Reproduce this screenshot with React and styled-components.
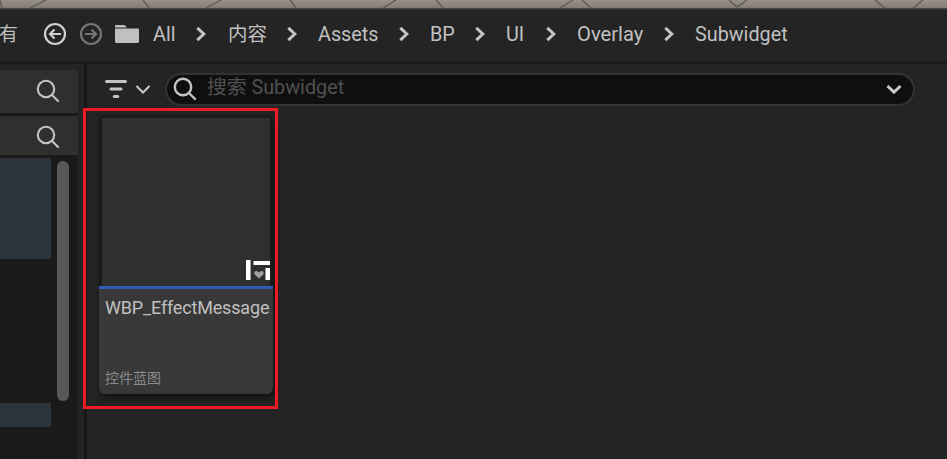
import React from "react";
import styled, { createGlobalStyle } from "styled-components";

const Global = createGlobalStyle`
  * { box-sizing: border-box; }
  body { margin: 0; background: #242424; overflow: hidden; }
  svg { display: block; flex: none; }
`;

const Window = styled.div`
  position: relative;
  display: flex;
  flex-direction: column;
  width: 947px;
  height: 459px;
  overflow: hidden;
  background: #242424;
  color: #c0c0c0;
  font-family: Roboto, "Noto Sans CJK SC", sans-serif;
`;

const Viewport = styled.div`
  height: 10px;
  flex: none;
  background: linear-gradient(#989089, #878078 7px, #7b756f 8px, #484848 8px, #484848 9px, #303030 9px);
`;

const PathBar = styled.nav`
  display: flex;
  align-items: center;
  height: 51px;
  flex: none;
  padding-bottom: 3px;
`;

const History = styled.div`
  display: flex;
  align-items: center;
  width: 153px;
  flex: none;
`;

const HistoryLabel = styled.span`
  width: 43px;
  height: 28px;
  display: flex;
  align-items: center;
  padding-bottom: 3px;
  font-size: 19px;
  text-indent: -1px;
`;

const HistoryIcon = styled.span`
  width: 36px;
  opacity: ${(p) => (p.$disabled ? 0.48 : 1)};
`;

const Crumb = styled.span`
  display: flex;
  align-items: center;
  width: ${(p) => p.$width}px;
  height: 28px;
  padding-bottom: ${(p) => p.$lift || 0}px;
  flex: none;
  font-size: ${(p) => p.$size || 19.8}px;
  text-indent: ${(p) => (p.$lift ? 1 : 0)}px;
  white-space: nowrap;
`;

const Separator = styled.span`
  width: 31px;
  flex: none;
`;

const Divider = styled.div`
  height: 3px;
  flex: none;
  background: #1a1a1a;
`;

const Body = styled.div`
  display: flex;
  flex: 1;
  min-height: 0;
`;

const Sidebar = styled.aside`
  display: flex;
  flex-direction: column;
  width: 78px;
  margin-top: 6px;
  flex: none;
  background: #1a1a1a;
`;

const SectionHeader = styled.div`
  display: flex;
  justify-content: flex-end;
  height: ${(p) => p.$height}px;
  padding: 9px 18px 0 0;
  margin-bottom: 3px;
  flex: none;
  background: #2f2f2f;
`;

const Tree = styled.div`
  display: flex;
  flex: 1;
`;

const Rows = styled.div`
  width: 51px;
`;

const SelectedRow = styled.div`
  height: ${(p) => p.$height}px;
  margin-bottom: 144px;
  background: #2c333b;
`;

const ScrollThumb = styled.div`
  width: 12px;
  height: 240px;
  margin: 3px 0 0 6px;
  border-radius: 6px;
  background: #575757;
`;

const Splitter = styled.div`
  width: 3px;
  margin-left: 6px;
  flex: none;
  background: #161616;
`;

const Content = styled.main`
  flex: 1;
  min-width: 0;
`;

const Toolbar = styled.div`
  display: flex;
  height: 51px;
  padding: 9px 0 0 18px;
`;

const FilterButton = styled.div`
  display: flex;
  gap: 8px;
  width: 60px;
  padding-top: 6px;
`;

const SearchBox = styled.div`
  display: flex;
  align-items: center;
  width: 750px;
  height: 33px;
  padding: 0 11px 1px 6px;
  border: 2px solid #333;
  border-radius: 17px;
  background: #0f0f0f;
`;

const Placeholder = styled.span`
  flex: 1;
  margin: -3px 0 0 10px;
  color: #505050;
  font-size: 19.8px;
  line-height: 26px;
  white-space: nowrap;
`;

const Card = styled.article`
  width: 174px;
  height: 279px;
  margin-left: 12px;
  overflow: hidden;
  border-radius: 6px;
  background: #383838;
  box-shadow: 2px 4px 6px rgba(0, 0, 0, 0.55);
`;

const Thumbnail = styled.div`
  display: flex;
  justify-content: flex-end;
  align-items: flex-end;
  height: 171px;
  padding-bottom: 6px;
  border: 3px solid #1a1a1a;
  border-bottom: 0;
  background: #2f2f2f;
`;

const TypeStripe = styled.div`
  height: 3px;
  background: #2e5dbb;
`;

const Caption = styled.div`
  display: flex;
  flex-direction: column;
  justify-content: space-between;
  height: 105px;
  padding: 6px 0 6px 6px;
`;

const AssetName = styled.div`
  font-size: 18px;
  letter-spacing: -0.17px;
  line-height: 25px;
  white-space: nowrap;
`;

const AssetType = styled.div`
  color: #8a8a8a;
  font-size: 14px;
  line-height: 20px;
`;

const Highlight = styled.div`
  position: absolute;
  left: 83px;
  top: 108px;
  width: 195px;
  height: 301px;
  border: 3px solid #ed1c24;
`;

const crumbs = [
  { text: "All", width: 43 },
  { text: "内容", width: 60, size: 19.5, lift: 3 },
  { text: "Assets", width: 81 },
  { text: "BP", width: 45 },
  { text: "UI", width: 40 },
  { text: "Overlay", width: 87, size: 20.2 },
  { text: "Subwidget", width: 100, size: 19.8 },
];

function SceneLines() {
  return (
    <svg width="947" height="8" fill="none" stroke="#5f5a5b" strokeWidth="1.4">
      <path d="M0 0l2 8M46 0L30 8M143 0l6 8M221 0l-15 8M290 0l6 8M396 0l-13 8M436 0l7 8M573 0l-13 8M582 0l9 8M729 0l8 7 10-7M875 0l10 8M923 0l-10 8" />
    </svg>
  );
}

function CircleArrow({ right }) {
  return (
    <svg width="24" height="24" viewBox="0 0 24 24" fill="none" stroke="#d0d0d0" strokeWidth="2.2">
      <circle cx="12" cy="12" r="10" />
      <path d={right ? "M6 12H17M12.500 7.500l4.500 4.500-4.500 4.500" : "M18 12H7M11.500 7.500L7 12l4.500 4.500"} />
    </svg>
  );
}

function Folder() {
  return (
    <svg width="24" height="20" viewBox="0 0 24 20" fill="#c0c0c0">
      <path d="M0 3.600V1.800Q0 1 .8 1H9q1 0 1.600.9l1.200 1.700z" />
      <path d="M0 4.600h23q1 0 1 1v12q0 1.400-1.400 1.400H1.400Q0 19 0 17.600z" />
    </svg>
  );
}

function ChevronRight() {
  return (
    <svg width="11" height="16" viewBox="0 0 11 16" fill="none" stroke="#c4c4c4" strokeWidth="3">
      <path d="M1.300 1.800L7.800 8l-6.500 6.200" />
    </svg>
  );
}

function Magnifier({ weight = 2.1 }) {
  return (
    <svg width="24" height="24" viewBox="0 0 24 24" fill="none" stroke="#c4c4c4" strokeWidth={weight} strokeLinecap="round">
      <circle cx="10" cy="10" r="8.200" />
      <path d="M16 16L22 22" />
    </svg>
  );
}

function FilterIcon() {
  return (
    <svg width="22" height="20" viewBox="0 0 22 20" stroke="#c4c4c4" strokeWidth="3" strokeLinecap="round">
      <path d="M1.500 2.500h19M6 10h10M9.200 17.500h3.600" />
    </svg>
  );
}

function ChevronDown({ bold }) {
  return (
    <svg width="16" height="20" viewBox="0 0 16 20" fill="none" stroke="#c8c8c8" strokeWidth={bold ? 3 : 2}>
      <path d={bold ? "M1.500 7L8 13.200 14.500 7" : "M1.500 7L8 13.500 14.500 7"} />
    </svg>
  );
}

function WidgetIcon() {
  return (
    <svg width="24" height="20" viewBox="0 0 24 20">
      <path fill="#fff" d="M0 0h4v20H0zM8 1h16v4H8zM20 8h4v12h-4z" />
      <path fill="#a0a0a0" d="M4 0h1v20H4zM7 1h1v4H7zM19 8h1v12h-1zM13 18.500L8.500 14.200q-1-3.200 1.800-3.200 2 0 2.700 1.500 .7-1.500 2.700-1.500 2.800 0 1.800 3.200z" />
    </svg>
  );
}

export default function App() {
  return (
    <Window>
      <Global />
      <Viewport><SceneLines /></Viewport>
      <PathBar>
        <History>
          <HistoryLabel>有</HistoryLabel>
          <HistoryIcon><CircleArrow /></HistoryIcon>
          <HistoryIcon $disabled><CircleArrow right /></HistoryIcon>
          <Folder />
        </History>
        {crumbs.map((c, i) => (
          <React.Fragment key={c.text}>
            <Crumb $width={c.width} $size={c.size} $lift={c.lift}>{c.text}</Crumb>
            {i < crumbs.length - 1 && <Separator><ChevronRight /></Separator>}
          </React.Fragment>
        ))}
      </PathBar>
      <Divider />
      <Body>
        <Sidebar>
          <SectionHeader $height={43}><Magnifier /></SectionHeader>
          <SectionHeader $height={39}><Magnifier /></SectionHeader>
          <Tree>
            <Rows>
              <SelectedRow $height={101} />
              <SelectedRow $height={24} />
            </Rows>
            <ScrollThumb />
          </Tree>
        </Sidebar>
        <Splitter />
        <Content>
          <Toolbar>
            <FilterButton><FilterIcon /><ChevronDown /></FilterButton>
            <SearchBox>
              <Magnifier weight={2.4} />
              <Placeholder>搜索 Subwidget</Placeholder>
              <ChevronDown bold />
            </SearchBox>
          </Toolbar>
          <Card>
            <Thumbnail><WidgetIcon /></Thumbnail>
            <TypeStripe />
            <Caption>
              <AssetName>WBP_EffectMessage</AssetName>
              <AssetType>控件蓝图</AssetType>
            </Caption>
          </Card>
        </Content>
      </Body>
      <Highlight />
    </Window>
  );
}
